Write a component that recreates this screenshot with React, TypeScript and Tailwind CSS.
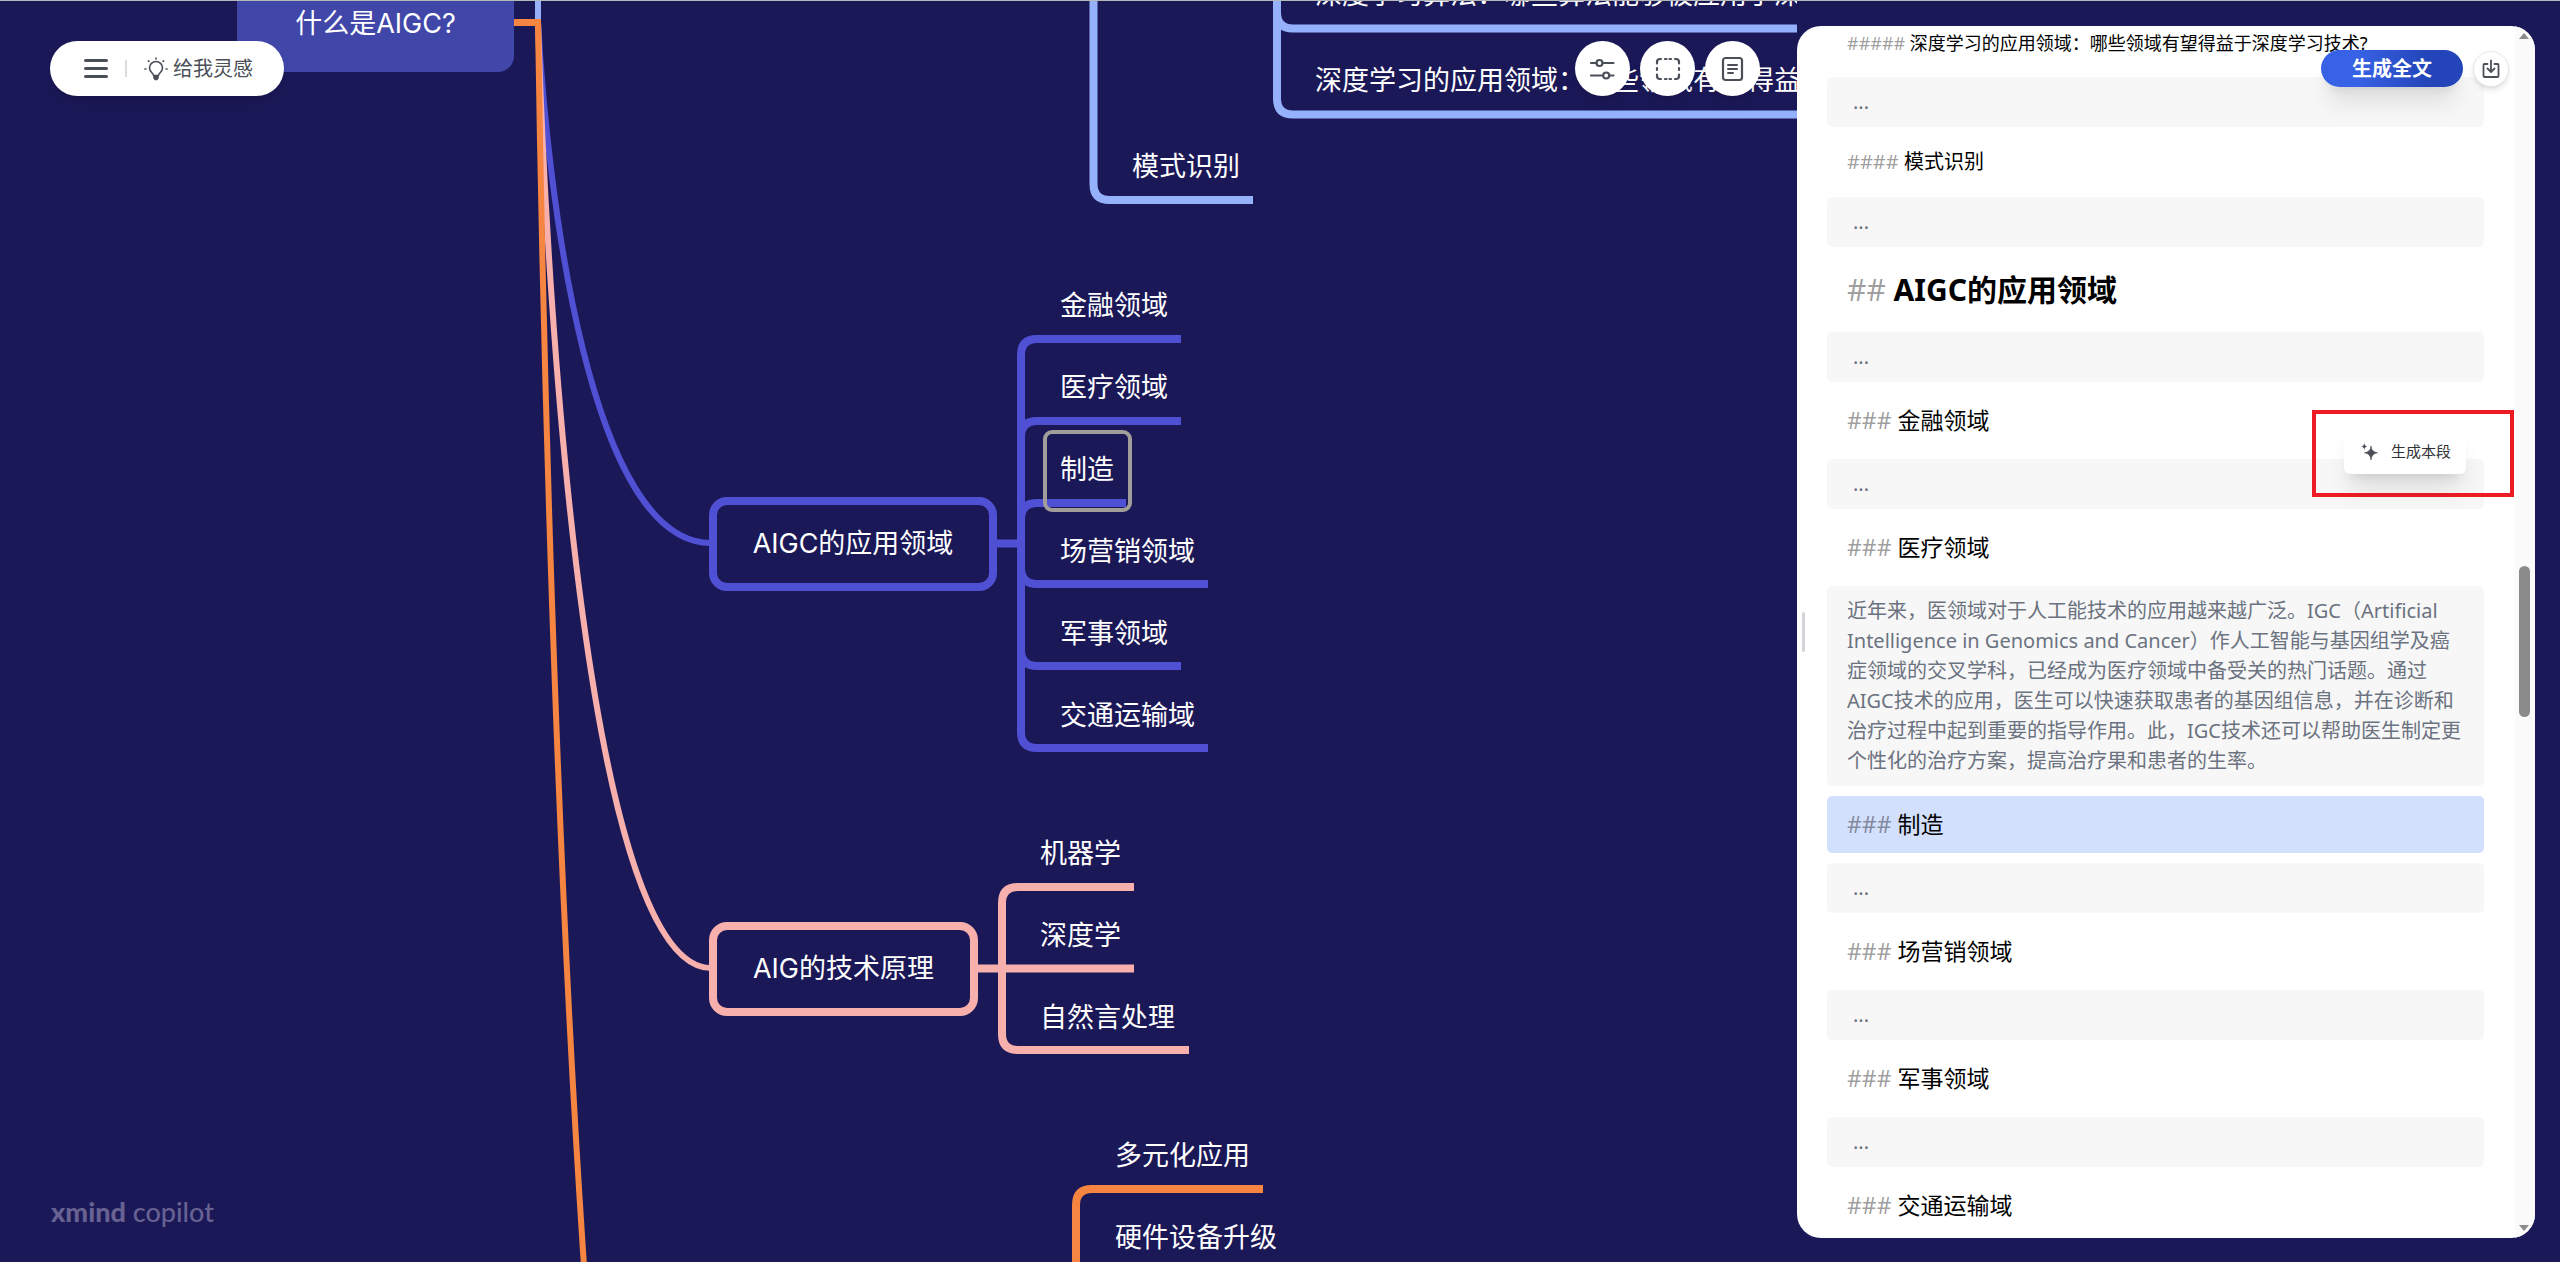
import React from "react";

const CJK = "font-['Noto_Sans','Noto_Sans_CJK_SC',sans-serif]";

type Topic = { text: string; left: string; top: string };

const topics: Topic[] = [
  { text: "深度学习算法：哪些算法能够被应用于深度学习技术", left: "left-[1315px]", top: "top-[-26px]" },
  { text: "深度学习的应用领域：哪些领域有望得益于深度学习技术", left: "left-[1315px]", top: "top-[60px]" },
  { text: "模式识别", left: "left-[1132px]", top: "top-[146px]" },
  { text: "金融领域", left: "left-[1060px]", top: "top-[285px]" },
  { text: "医疗领域", left: "left-[1060px]", top: "top-[367px]" },
  { text: "制造", left: "left-[1060px]", top: "top-[449px]" },
  { text: "场营销领域", left: "left-[1060px]", top: "top-[531px]" },
  { text: "军事领域", left: "left-[1060px]", top: "top-[613px]" },
  { text: "交通运输域", left: "left-[1060px]", top: "top-[695px]" },
  { text: "机器学", left: "left-[1040px]", top: "top-[833px]" },
  { text: "深度学", left: "left-[1040px]", top: "top-[915px]" },
  { text: "自然言处理", left: "left-[1040px]", top: "top-[997px]" },
  { text: "多元化应用", left: "left-[1115px]", top: "top-[1135px]" },
  { text: "硬件设备升级", left: "left-[1115px]", top: "top-[1217px]" },
];

function Connectors() {
  return (
    <svg className="absolute left-0 top-0 h-[1262px] w-[2000px]" viewBox="0 0 2000 1262" fill="none" aria-hidden="true">
      <g stroke="#95b1fc" strokeWidth="8">
        <path d="M538 22V-10" strokeWidth="6" />
        <path d="M1093.5 -10V184Q1093.5 200 1109.5 200H1253" />
        <path d="M1277 -10V12.5Q1277 28.5 1293 28.5H2000" />
        <path d="M1277 -10V98.5Q1277 114.5 1293 114.5H2000" />
      </g>
      <g stroke="#5050d4" strokeWidth="8">
        <path d="M538 22C548 200 590 543 711 543" strokeWidth="6" />
        <path d="M996 543.5H1021" />
        <path d="M1021 543V355Q1021 339 1037 339H1181" />
        <path d="M1021 543V437Q1021 421 1037 421H1181" />
        <path d="M1021 543V519Q1021 503 1037 503H1126" />
        <path d="M1021 543V568Q1021 584 1037 584H1208" />
        <path d="M1021 543V650Q1021 666 1037 666H1181" />
        <path d="M1021 543V732Q1021 748 1037 748H1208" />
      </g>
      <g stroke="#f7b0ac" strokeWidth="8">
        <path d="M538 22C548 345 590 968 711 968" strokeWidth="6" />
        <path d="M976 968.5H1134" />
        <path d="M1002 968V903Q1002 887 1018 887H1134" />
        <path d="M1002 968V1034Q1002 1050 1018 1050H1189" />
      </g>
      <g stroke="#f58540">
        <path d="M512 22.5H541" strokeWidth="7" />
        <path d="M538 22C548 690 590 1975 711 1975" strokeWidth="6" />
        <path d="M1076 1280V1205Q1076 1189 1092 1189H1263" strokeWidth="8" />
      </g>
    </svg>
  );
}

function MindMap() {
  return (
    <div className="absolute inset-0 overflow-hidden font-['Inter','Noto_Sans_CJK_SC',sans-serif] text-[27px] leading-[42px] whitespace-nowrap text-white">
      <Connectors />
      <div className="absolute left-[237px] top-[-24px] flex h-[96px] w-[277px] items-center justify-center rounded-2xl bg-[#4047a8]">
        什么是AIGC?
      </div>
      <div className="absolute left-[709px] top-[497px] flex h-[94px] w-[288px] items-center justify-center rounded-[18px] border-8 border-[#5050d4]">
        AIGC的应用领域
      </div>
      <div className="absolute left-[709px] top-[922px] flex h-[94px] w-[269px] items-center justify-center rounded-[18px] border-8 border-[#f7b0ac]">
        AIG的技术原理
      </div>
      {topics.map((t) => (
        <div key={t.text} className={`absolute ${t.left} ${t.top}`}>
          {t.text}
        </div>
      ))}
      <div className="absolute left-[1043px] top-[430px] h-[82px] w-[89px] rounded-[9px] border-4 border-[#a09d9b]" />
    </div>
  );
}

function BulbIcon() {
  return (
    <svg className="h-6 w-6" viewBox="0 0 24 24" fill="none" stroke="#4b4f58" strokeWidth="1.6" strokeLinecap="round" strokeLinejoin="round">
      <path d="M9.600 18.500C9.200 16 5.500 15 5.500 11A6.500 6.500 0 0 1 18.500 11C18.500 15 14.800 16 14.400 18.500Z" />
      <path d="M10 19V21L11.200 22.500H12.800L14 21V19Z" fill="#4b4f58" />
      <path d="M12 1V2M4.300 3.800L5 4.500M19.700 3.800L19 4.500M1 12H2M22 12H23" />
    </svg>
  );
}

function SlidersIcon() {
  return (
    <svg className="h-7 w-7" viewBox="0 0 28 28" fill="none" stroke="#4b4f58" strokeWidth="2.200" strokeLinecap="round">
      <path d="M2 8H7.500M13.500 8H24.500M2 20.500H14M20.500 20.500H24.500" />
      <circle cx="10.500" cy="8" r="3" />
      <circle cx="17.200" cy="20.500" r="3" />
    </svg>
  );
}

function SelectIcon() {
  return (
    <svg className="h-7 w-7" viewBox="0 0 28 28" fill="none" stroke="#4b4f58" strokeWidth="2.200" strokeLinecap="round">
      <path d="M3 8.500V7A3 3 0 0 1 6 4H7M21 4H22A3 3 0 0 1 25 7V8.500M25 19.500V21A3 3 0 0 1 22 24H21M7 24H6A3 3 0 0 1 3 21V19.500" />
      <path d="M11 4H12.500M15.500 4H17M11 24H12.500M15.500 24H17M3 13V15M25 13V15" />
    </svg>
  );
}

function NoteIcon() {
  return (
    <svg className="h-7 w-7" viewBox="0 0 28 28" fill="none" stroke="#4b4f58" strokeWidth="2.200" strokeLinecap="round">
      <rect x="4" y="3" width="19" height="22" rx="2.500" />
      <path d="M9 10H18M9 14H18M9 18H14" strokeWidth="2" />
    </svg>
  );
}

function ExportIcon() {
  return (
    <svg className="h-5 w-5" viewBox="0 0 20 20" fill="none" stroke="#4b4f58" strokeWidth="1.800" strokeLinecap="round" strokeLinejoin="round">
      <path d="M6.500 5H3.500A1 1 0 0 0 2.500 6V17A1 1 0 0 0 3.500 18H16.500A1 1 0 0 0 17.500 17V6A1 1 0 0 0 16.500 5H13.500" />
      <path d="M10 1.500V12.500M6.500 9.500L10 13L13.500 9.500" />
    </svg>
  );
}

function SparkIcon() {
  return (
    <svg className="h-[18px] w-[18px]" viewBox="0 0 18 18" fill="#4b4f58">
      <path d="M10 3Q10.500 9 16.500 9.800Q10.500 10.600 10 17Q9.500 10.600 3.500 9.800Q9.500 9 10 3Z" stroke="#4b4f58" strokeWidth="0.600" />
      <path d="M3.300 0Q3.700 3.100 6.600 3.500Q3.700 3.900 3.300 7Q2.900 3.900 0 3.500Q2.900 3.100 3.300 0Z" />
    </svg>
  );
}

function Hashes({ n }: { n: number }) {
  return <span className="font-normal text-black/40">{"#".repeat(n)} </span>;
}

function H3({ children, active }: { children: string; active?: boolean }) {
  return (
    <h3 className={`rounded-[5px] px-5 py-[10px] text-[23px] leading-[37px] ${active ? "bg-[#d2dffd]" : ""}`}>
      <Hashes n={3} />
      {children}
    </h3>
  );
}

function Empty() {
  return <p className="rounded-[5px] bg-[#f7f7f7] px-[26px] py-[10px] text-xl leading-[30px] text-[#6b7280]">...</p>;
}

function Outline() {
  return (
    <article className="flex min-w-0 flex-1 flex-col gap-[10px] pr-[31px] pl-[30px] text-black">
      <h5 className="px-5 pt-1 pb-[11px] text-lg leading-[26px]">
        <Hashes n={5} />
        深度学习的应用领域：哪些领域有望得益于深度学习技术?
      </h5>
      <Empty />
      <h4 className="px-5 py-[10px] text-xl leading-[30px]">
        <Hashes n={4} />
        模式识别
      </h4>
      <Empty />
      <h2 className="px-5 py-[10px] text-[30px] leading-[45px] font-bold">
        <Hashes n={2} />
        AIGC的应用领域
      </h2>
      <Empty />
      <H3>金融领域</H3>
      <Empty />
      <H3>医疗领域</H3>
      <p className="rounded-[5px] bg-[#f7f7f7] px-5 py-[10px] text-xl leading-[30px] whitespace-nowrap text-[#6b7280]">
        近年来，医领域对于人工能技术的应用越来越广泛。IGC（Artificial
        <br />
        Intelligence in Genomics and Cancer）作人工智能与基因组学及癌
        <br />
        症领域的交叉学科，已经成为医疗领域中备受关的热门话题。通过
        <br />
        AIGC技术的应用，医生可以快速获取患者的基因组信息，并在诊断和
        <br />
        治疗过程中起到重要的指导作用。此，IGC技术还可以帮助医生制定更
        <br />
        个性化的治疗方案，提高治疗果和患者的生率。
      </p>
      <H3 active>制造</H3>
      <Empty />
      <H3>场营销领域</H3>
      <Empty />
      <H3>军事领域</H3>
      <Empty />
      <H3>交通运输域</H3>
    </article>
  );
}

export default function App() {
  const round = "flex size-[55px] items-center justify-center rounded-full bg-white shadow-lg";
  return (
    <div className={`relative flex h-screen overflow-hidden bg-[#1b1858] ${CJK}`}>
      <div className="absolute inset-x-0 top-0 z-10 h-px bg-[#b5b8b8]" />
      <main className="relative flex min-w-0 flex-1 flex-col justify-between overflow-hidden">
        <MindMap />
        <header className="relative flex items-start justify-between pt-[41px] pr-[37px] pl-[50px]">
          <nav className="flex h-[55px] items-center rounded-full bg-white pr-[31px] pl-[34px] shadow-lg">
            <button type="button" aria-label="菜单" className="flex w-6 flex-col gap-[5px]">
              <span className="h-[3px] rounded-full bg-[#4b4f58]" />
              <span className="h-[3px] rounded-full bg-[#4b4f58]" />
              <span className="h-[3px] rounded-full bg-[#4b4f58]" />
            </button>
            <span className="mx-[17px] h-[17px] w-[2px] bg-[#dcdcdf]" />
            <button type="button" className="flex items-center gap-[5px] text-xl leading-[30px] text-[#4b4f58]">
              <BulbIcon />
              给我灵感
            </button>
          </nav>
          <div className="flex gap-[10px]">
            <button type="button" aria-label="设置" className={round}><SlidersIcon /></button>
            <button type="button" aria-label="框选" className={round}><SelectIcon /></button>
            <button type="button" aria-label="大纲" className={round}><NoteIcon /></button>
          </div>
        </header>
        <footer className="relative px-[51px] pb-[34px] font-['Lato',sans-serif] text-[27px] leading-8 text-[#676292]">
          <span className="font-black">xmind</span> <span className="font-medium">copilot</span>
        </footer>
      </main>

      <div className="w-[763px] shrink-0 pt-[26px] pr-[25px] pb-6">
        <aside className="relative flex h-full overflow-hidden rounded-3xl bg-white">
          <span className="absolute top-1/2 left-[5px] h-10 w-[3px] -translate-y-1/2 rounded-full bg-[#d4d4d8]" />
          <Outline />
          <div className="relative w-5 shrink-0 bg-[#fbfbfb]">
            <span className="absolute top-[7px] left-[4px] border-x-[5px] border-b-[6px] border-x-transparent border-b-[#8b8b8b]" />
            <span className="absolute top-[540px] left-[4px] h-[151px] w-[11px] rounded-full bg-[#8b8b8b]" />
            <span className="absolute bottom-[7px] left-[4px] border-x-[5px] border-t-[6px] border-x-transparent border-t-[#8b8b8b]" />
          </div>
          <div className="absolute top-6 right-[26px] flex items-center gap-[10px]">
            <button type="button" className="h-[37px] w-[142px] rounded-full bg-linear-to-r from-[#3862e6] from-25% to-[#2345b9] to-75% text-xl font-bold text-white shadow-xl">
              生成全文
            </button>
            <button type="button" aria-label="导出" className="flex size-9 items-center justify-center rounded-full border border-[#e6e6e6] bg-white shadow-md">
              <ExportIcon />
            </button>
          </div>
          <div className="absolute top-[384px] right-[21px] flex h-[87px] w-[202px] items-start border-4 border-[#ed1c24] pt-[15px] pl-7">
            <button type="button" className="flex h-[45px] w-[122px] items-center justify-between rounded-md bg-white pr-[15px] pl-[17px] text-[15px] text-[#2f3237] shadow-xl">
              <SparkIcon />
              生成本段
            </button>
          </div>
        </aside>
      </div>
    </div>
  );
}
